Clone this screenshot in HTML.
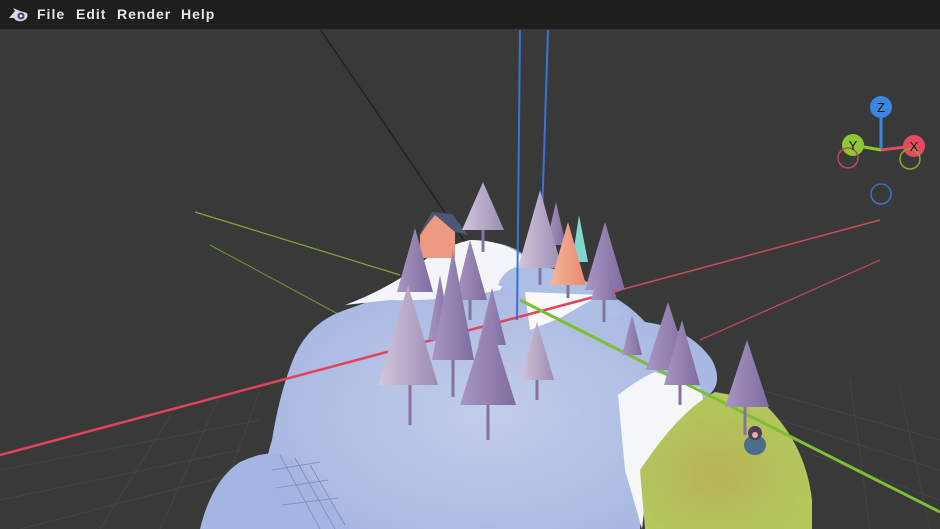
<!DOCTYPE html>
<html><head><meta charset="utf-8"><style>
html,body{margin:0;padding:0;width:940px;height:529px;overflow:hidden;background:#393939;font-family:"Liberation Sans",sans-serif}
.bar{position:absolute;left:0;top:0;width:940px;height:29px;background:#1e1e1e;color:#e6e6e6;font-size:14px;font-weight:bold;letter-spacing:1px}
.bar span{position:absolute;top:6px}
svg{position:absolute;left:0;top:0}
</style></head><body>
<svg width="940" height="529" viewBox="0 0 940 529">
<defs>
<linearGradient id="tr" x1="0" x2="1"><stop offset="0" stop-color="#a896c4"/><stop offset="1" stop-color="#7f6c9f"/></linearGradient>
<linearGradient id="tl" x1="0" x2="1"><stop offset="0" stop-color="#d2c6dc"/><stop offset="1" stop-color="#9c8cb2"/></linearGradient>
<linearGradient id="ts" x1="0" x2="1"><stop offset="0" stop-color="#f6b59a"/><stop offset="1" stop-color="#e58a6f"/></linearGradient>
<radialGradient id="blob" cx="0.5" cy="0.6" r="0.6"><stop offset="0" stop-color="#c3cdea"/><stop offset="1" stop-color="#a3b4e0"/></radialGradient>
<radialGradient id="gr" cx="0.45" cy="0.6" r="0.6"><stop offset="0" stop-color="#b7b356"/><stop offset="1" stop-color="#b3c95e"/></radialGradient>
</defs>
<g stroke="#444" stroke-width="1" fill="none">
<path d="M0,470 L260,420 M0,500 L240,450 M20,529 L250,470 M180,400 L100,529 M220,395 L160,529 M260,390 L210,529 M760,390 L940,440 M780,420 L940,470 M800,450 L940,500 M850,380 L870,529 M900,390 L930,529"/>
</g>
<line x1="320" y1="29" x2="518" y2="320" stroke="#222" stroke-width="1.5"/>
<line x1="195" y1="212" x2="400" y2="275" stroke="#7fa83a" stroke-width="1.2"/>
<line x1="210" y1="245" x2="340" y2="315" stroke="#6f9a34" stroke-width="1"/>
<line x1="620" y1="290" x2="880" y2="220" stroke="#c94a5a" stroke-width="1.5"/>
<line x1="700" y1="340" x2="880" y2="260" stroke="#c94a5a" stroke-width="1.2"/>
<!-- terrain -->
<path d="M260,529 Q262,470 272,440 Q280,390 295,355 Q310,322 345,310 Q390,295 420,275 Q450,245 490,242 Q520,246 530,262 Q570,272 605,292 Q630,305 645,322 Q690,328 712,360 Q725,385 705,398 Q665,415 650,430 L640,529 Z" fill="url(#blob)"/>
<path d="M345,305 Q380,292 410,272 Q435,248 470,240 Q505,240 525,258 L500,290 Q440,302 390,300 Z" fill="#f3f5fb"/>
<path d="M498,285 Q505,265 530,265 Q575,272 605,292 L625,312 L600,325 L560,310 Z" fill="#aebfe6"/>
<path d="M525,292 L600,295 L560,318 L530,330 Z" fill="#fafafa"/>
<path d="M200,529 Q212,480 240,462 Q265,450 285,455 Q315,475 350,529 Z" fill="#a4b5e2"/>
<g stroke="#7d8bb3" stroke-width="0.8" fill="none"><path d="M280,455 L320,529 M295,458 L335,529 M310,465 L345,525 M272,470 L320,462 M276,488 L328,480 M282,505 L338,498"/></g>
<path d="M618,395 Q640,378 655,372 L700,388 L715,440 L650,460 L642,529 L625,470 Z" fill="#f4f6f8"/>
<path d="M640,470 Q680,410 715,392 L760,400 Q805,440 812,500 L812,529 L645,529 Z" fill="url(#gr)"/>
<line x1="0" y1="455" x2="620" y2="290" stroke="#e0445a" stroke-width="2.5"/>
<line x1="520" y1="300" x2="940" y2="512" stroke="#7cbf30" stroke-width="3"/>
<line x1="520" y1="30" x2="517" y2="320" stroke="#3a72d6" stroke-width="2"/>
<line x1="548" y1="30" x2="540" y2="280" stroke="#3a72d6" stroke-width="2"/>
<!-- house -->
<path d="M420,235 L435,213 L455,230 L455,258 L420,258 Z" fill="#ee9a82"/>
<path d="M418,236 L432,212 L452,214 L468,235 L455,232 L435,215 Z" fill="#4c5676"/>
<g stroke="#8473a2" stroke-width="3">
<line x1="483" y1="228" x2="483" y2="252"/><line x1="540" y1="265" x2="540" y2="285"/><line x1="568" y1="284" x2="568" y2="298"/>
<line x1="604" y1="295" x2="604" y2="322"/><line x1="453" y1="355" x2="453" y2="397"/><line x1="410" y1="380" x2="410" y2="425"/>
<line x1="488" y1="400" x2="488" y2="440"/><line x1="537" y1="378" x2="537" y2="400"/><line x1="680" y1="380" x2="680" y2="405"/>
<line x1="745" y1="402" x2="745" y2="435"/><line x1="470" y1="295" x2="470" y2="320"/>
</g>
<polygon points="483,182 462,230 504,230" fill="url(#tl)"/>
<polygon points="556,202 546,245 566,245" fill="url(#tr)"/>
<polygon points="540,190 518,268 562,268" fill="url(#tl)"/>
<polygon points="579,215 572,262 588,262" fill="#7fd8cc"/>
<polygon points="568,222 550,285 586,285" fill="url(#ts)"/>
<polygon points="605,222 585,290 625,290" fill="url(#tr)"/>
<polygon points="604,255 591,300 617,300" fill="url(#tr)"/>
<polygon points="415,228 397,292 433,292" fill="url(#tr)"/>
<polygon points="470,240 455,300 487,300" fill="url(#tr)"/>
<polygon points="440,275 428,340 452,340" fill="url(#tr)"/>
<polygon points="453,250 432,360 474,360" fill="url(#tr)"/>
<polygon points="492,288 478,345 506,345" fill="url(#tr)"/>
<polygon points="408,285 378,385 438,385" fill="url(#tl)"/>
<polygon points="488,315 460,405 516,405" fill="url(#tr)"/>
<polygon points="537,322 520,380 554,380" fill="url(#tl)"/>
<polygon points="632,315 622,355 642,355" fill="url(#tr)"/>
<polygon points="668,302 646,370 690,370" fill="url(#tr)"/>
<polygon points="682,320 664,385 700,385" fill="url(#tr)"/>
<polygon points="747,340 725,407 769,407" fill="url(#tr)"/>
<ellipse cx="755" cy="445" rx="11" ry="10" fill="#4a6e8a"/>
<circle cx="755" cy="433" r="7" fill="#4b3f5a"/>
<circle cx="755" cy="435" r="3" fill="#e8b0a0"/>
<line x1="881" y1="108" x2="881" y2="150" stroke="#3a86e0" stroke-width="3"/>
<line x1="881" y1="150" x2="853" y2="145" stroke="#8cc930" stroke-width="3"/>
<line x1="881" y1="150" x2="914" y2="146" stroke="#e64a60" stroke-width="3"/>
<circle cx="881" cy="107" r="11" fill="#3a86e0"/>
<circle cx="853" cy="145" r="11" fill="#8cc930"/>
<circle cx="914" cy="146" r="11" fill="#e64a60"/>
<circle cx="848" cy="158" r="10" fill="none" stroke="#b84a55" stroke-width="1.5"/>
<circle cx="910" cy="159" r="10" fill="none" stroke="#88a838" stroke-width="1.5"/>
<circle cx="881" cy="194" r="10" fill="none" stroke="#3f6fbf" stroke-width="1.5"/>
<g font-family="Liberation Sans,sans-serif" font-size="13" fill="#111" text-anchor="middle">
<text x="881" y="112">Z</text><text x="853" y="150">Y</text><text x="914" y="151">X</text></g>
</svg>
<div class="bar">
<svg width="24" height="20" viewBox="0 0 24 20" style="left:7px;top:5px"><path d="M2,13 L8,6 L6,3 L13,6 L20,8 Q22,14 15,16 Q9,17 7,13 Z" fill="#d7d7e8"/><circle cx="14" cy="11" r="3.5" fill="#3e3a6a"/><circle cx="14" cy="11" r="1.5" fill="#fff"/></svg>
<span style="left:37px">File</span><span style="left:76px">Edit</span><span style="left:117px">Render</span><span style="left:181px">Help</span>
</div>
</body></html>
